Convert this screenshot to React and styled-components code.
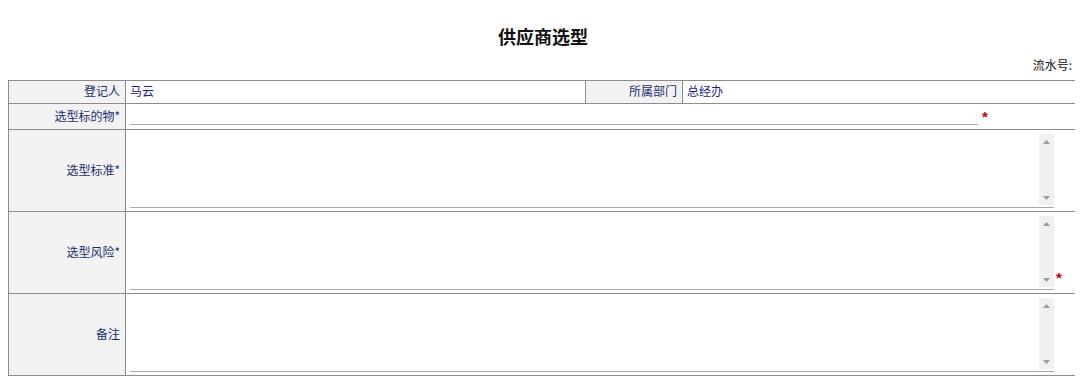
import React from "react";
import styled, { createGlobalStyle } from "styled-components";

const GlobalStyle = createGlobalStyle`
  body {
    margin: 8px;
    background: #ffffff;
    font-family: "Noto Sans CJK SC", "Liberation Sans", sans-serif;
    font-size: 12px;
    color: #000;
  }
`;

const fields = [
  { label: "选型标准*", star: false },
  { label: "选型风险*", star: true },
  { label: "备注", star: false },
];

function Arrow({ down }) {
  return (
    <svg width="7" height="4" viewBox="0 0 7 4">
      <path d={down ? "M0 0 L7 0 L3.5 4 Z" : "M0 4 L7 4 L3.5 0 Z"} fill="#9c9c9c" />
    </svg>
  );
}

function App() {
  return (
    <>
      <GlobalStyle />
      <Wrapper>
        <Title>供应商选型</Title>
        <SerialRow>流水号:</SerialRow>
        <FormTable>
          <colgroup>
            <col style={{ width: 117 }} />
            <col style={{ width: 460 }} />
            <col style={{ width: 97 }} />
            <col />
          </colgroup>
          <tbody>
            <Row $height={23}>
              <LabelCell>登记人</LabelCell>
              <ValueCell>马云</ValueCell>
              <LabelCell>所属部门</LabelCell>
              <ValueCell>总经办</ValueCell>
            </Row>
            <Row $height={26}>
              <LabelCell>选型标的物*</LabelCell>
              <ValueCell colSpan={3}>
                <InlineField>
                  <LineInput type="text" />
                  <Star>*</Star>
                </InlineField>
              </ValueCell>
            </Row>
            {fields.map((f) => (
              <Row key={f.label} $height={82}>
                <LabelCell>{f.label}</LabelCell>
                <ValueCell colSpan={3}>
                  <AreaField>
                    <AreaBox>
                      <Area />
                      <ScrollTrack>
                        <Arrow />
                        <Arrow down />
                      </ScrollTrack>
                    </AreaBox>
                    {f.star && <Star $bottom>*</Star>}
                  </AreaField>
                </ValueCell>
              </Row>
            ))}
          </tbody>
        </FormTable>
        <Footnote>附件：相关附件请上传</Footnote>
      </Wrapper>
    </>
  );
}

const Wrapper = styled.div`
  width: 1070px;
`;

const Title = styled.h2`
  margin: 0;
  padding-top: 18px;
  height: 30px;
  line-height: 20px;
  text-align: center;
  font-size: 18px;
  font-weight: bold;
  color: #111;
`;

const SerialRow = styled.div`
  text-align: right;
  padding-right: 6px;
  height: 24px;
  line-height: 18px;
  font-size: 12px;
  color: #111;
`;

const FormTable = styled.table`
  width: 1070px;
  border-collapse: collapse;
  table-layout: fixed;
  border: 1px solid #8c8c8c;
`;

const Row = styled.tr`
  height: ${(p) => p.$height}px;
`;

const LabelCell = styled.td`
  background: #f2f2f2;
  border: 1px solid #8c8c8c;
  text-align: right;
  vertical-align: middle;
  padding: 0 5px 2px 0;
  line-height: 14px;
  color: #1b2f6e;
  white-space: nowrap;
`;

const ValueCell = styled.td`
  border: 1px solid #8c8c8c;
  padding: 0 0 2px 4px;
  vertical-align: middle;
  line-height: 14px;
  color: #1c1c8a;
`;

const InlineField = styled.div`
  display: flex;
  align-items: flex-start;
  height: 20px;
`;

const LineInput = styled.input`
  width: 848px;
  height: 18px;
  margin: 0;
  padding: 0;
  border: none;
  border-bottom: 1px solid #a8a8a8;
  outline: none;
  background: transparent;
`;

const Star = styled.span`
  color: #d00000;
  font-family: "Liberation Sans", sans-serif;
  font-size: 15px;
  font-weight: bold;
  margin-left: ${(p) => (p.$bottom ? 2 : 4)}px;
  line-height: 12px;
  padding-top: ${(p) => (p.$bottom ? 0 : 5)}px;
  align-self: ${(p) => (p.$bottom ? "flex-end" : "flex-start")};
  margin-bottom: ${(p) => (p.$bottom ? 6 : 0)}px;
`;

const AreaField = styled.div`
  display: flex;
  align-items: flex-end;
  padding: 4px 0 1px;
`;

const AreaBox = styled.div`
  display: flex;
  width: 924px;
  height: 73px;
  border-bottom: 1px solid #a8a8a8;
`;

const Area = styled.textarea`
  flex: 1;
  display: block;
  margin: 0;
  padding: 0;
  border: none;
  outline: none;
  resize: none;
  overflow: hidden;
  font-family: inherit;
  font-size: 12px;
`;

const ScrollTrack = styled.div`
  width: 15px;
  height: 71px;
  background: #f0f0f0;
  display: flex;
  flex-direction: column;
  justify-content: space-between;
  align-items: center;
  padding: 6px 0 5px;
  box-sizing: border-box;
`;

const Footnote = styled.div`
  padding: 1px 2px;
  color: #111;
`;

export default App;
